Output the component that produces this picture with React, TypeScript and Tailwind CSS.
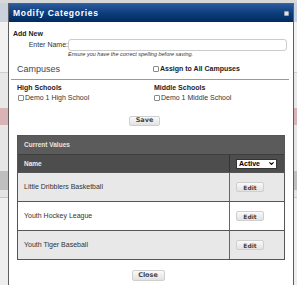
import { ChevronDown } from "lucide-react";

const rows = ["Little Dribblers Basketball", "Youth Hockey League", "Youth Tiger Baseball"];

function Box() {
  return <span className="inline-block h-[6px] w-[6px] shrink-0 rounded-[1px] border border-[#8a8a8a] bg-white" />;
}

function GrayButton({ label, className = "" }: { label: string; className?: string }) {
  return (
    <button
      type="button"
      className={`flex items-center justify-center rounded-[2px] border border-[#cfcfcf] bg-gradient-to-b from-[#fafafa] to-[#e2e2e2] text-[#444] ${className}`}
    >
      {label}
    </button>
  );
}

export default function App() {
  return (
    <div className="relative h-[285px] w-[297px] overflow-hidden bg-[#eeeeee] font-['Liberation_Sans',Arial,sans-serif]">
      {/* page behind the modal */}
      <div className="flex flex-col">
        <div className="h-[3px] bg-[#d8d8d8]" />
        <div className="h-[19px] bg-[#c9d1dc]" />
        <div className="h-[50px] bg-[#f2f2f2]" />
        <div className="h-px bg-[#cfcfcf]" />
        <div className="h-[35px] bg-[#e8e8e8]" />
        <div className="h-[17px] bg-[#d8b4b6]" />
        <div className="h-[46px] bg-[#e6e6e6]" />
        <div className="h-[19px] bg-[#bfbfbf]" />
        <div className="h-[7px] bg-[#e4e4e4]" />
        <div className="h-px bg-[#c8c8c8]" />
      </div>

      {/* modal */}
      <div className="absolute left-[8px] top-[3px] flex h-[300px] w-[286px] flex-col border border-[#5e5e5e] bg-white">
        <div className="flex h-[18px] shrink-0 items-center justify-between bg-gradient-to-b from-[#2a5b9c] via-[#0d3d7c] to-[#012b60] pl-[4px] pr-[4px]">
          <span className="text-[8.5px] font-bold leading-none tracking-[0.7px] text-white">Modify Categories</span>
          <span className="h-[5px] w-[5px] rounded-[1px] border border-[#9aa4b0] bg-[#dfe3e8]" />
        </div>

        <div className="flex flex-col pl-[4px] pr-[5px] pt-[8px] text-[#222]">
          <div className="text-[7px] font-bold leading-[8px]">Add New</div>
          <div className="mt-[1px] flex items-center">
            <label className="w-[55px] text-right text-[7px] leading-[8px] text-[#333]">Enter Name:</label>
            <input className="h-[12px] w-[219px] rounded-[3px] border border-[#cccccc] bg-white outline-none" />
          </div>
          <div className="ml-[55px] text-[5.5px] italic leading-[6px] text-[#333]">
            Ensure you have the correct spelling before saving.
          </div>

          <div className="mt-[7px] flex items-center">
            <div className="w-[140px] pl-[4px] text-[9px] leading-[10px] text-[#444]">Campuses</div>
            <div className="flex items-center gap-[1px] text-[7px] font-bold leading-[8px] text-[#222]">
              <Box />
              Assign to All Campuses
            </div>
          </div>
          <div className="-ml-[2px] mt-[5px] h-px w-[278px] bg-[#9a9a9a]" />

          <div className="mt-[4px] flex">
            <div className="w-[140px] pl-[4px]">
              <div className="text-[7px] font-bold leading-[8px]">High Schools</div>
              <div className="mt-[2px] flex items-center gap-[1px] pl-[1px] text-[7px] leading-[8px] text-[#333]">
                <Box />
                Demo 1 High School
              </div>
            </div>
            <div className="pl-[1px]">
              <div className="text-[7px] font-bold leading-[8px]">Middle Schools</div>
              <div className="mt-[2px] flex items-center gap-[1px] text-[7px] leading-[8px] text-[#333]">
                <Box />
                Demo 1 Middle School
              </div>
            </div>
          </div>

          <div className="mt-[14px] flex justify-center pr-[12px]">
            <GrayButton label="Save" className="h-[10px] w-[31px] text-[6.5px] font-bold font-['DejaVu_Sans',sans-serif]" />
          </div>

          <div className="ml-[4px] mt-[9px] w-[268px] border border-[#555] text-[7px]">
            <div className="flex h-[18px] items-center bg-[#5b5b5b] pl-[6px] text-[6.5px] font-bold text-[#e6e6e6]">
              Current Values
            </div>
            <div className="flex h-[18px] border-t border-[#3e3e3e] bg-[#4d4d4d]">
              <div className="flex w-[212px] items-center border-r border-[#333] pl-[6px] text-[6.5px] font-bold text-[#eeeeee]">
                Name
              </div>
              <div className="flex items-center pl-[6px]">
                <div className="flex h-[10px] w-[41px] items-center justify-between border border-[#333] bg-white pl-[2px] pr-[1px]">
                  <span className="text-[7px] font-bold leading-none text-black">Active</span>
                  <ChevronDown className="h-[7px] w-[7px] text-black" strokeWidth={4} />
                </div>
              </div>
            </div>
            {rows.map((name, i) => (
              <div
                key={name}
                className={`flex h-[29px] border-t border-[#555] ${i % 2 === 0 ? "bg-[#e8e8e8]" : "bg-white"}`}
              >
                <div className="flex w-[212px] items-center border-r border-[#666] pl-[6px] text-[7px] text-[#333]">
                  {name}
                </div>
                <div className="flex items-center pl-[6px]">
                  <GrayButton label="Edit" className="h-[10px] w-[28px] text-[6px] font-bold font-['DejaVu_Sans',sans-serif]" />
                </div>
              </div>
            ))}
          </div>

          <div className="mt-[10px] flex justify-center pr-[5px]">
            <GrayButton label="Close" className="h-[11px] w-[33px] text-[6.5px] font-bold font-['DejaVu_Sans',sans-serif]" />
          </div>
        </div>
      </div>
    </div>
  );
}
